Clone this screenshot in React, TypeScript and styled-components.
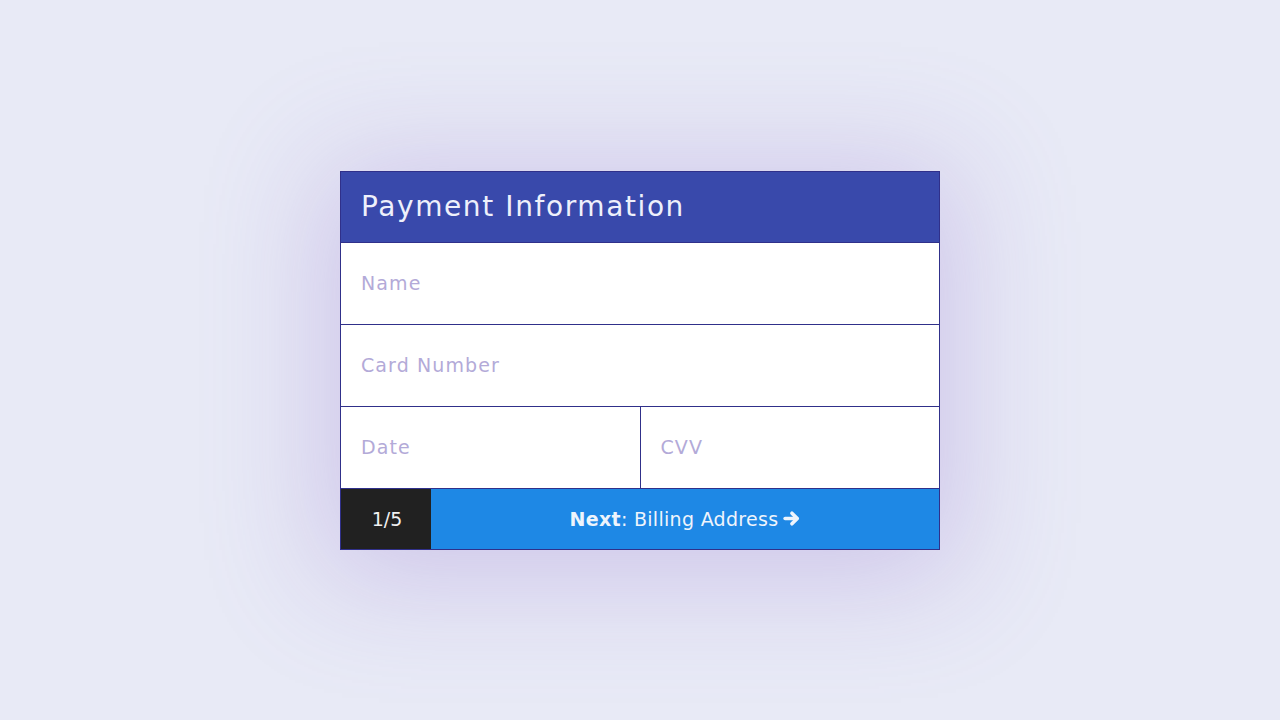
import React from "react";
import styled, { createGlobalStyle } from "styled-components";

const Global = createGlobalStyle`
  * { box-sizing: border-box; }
  body {
    margin: 0;
    background: #e8eaf6;
    font-family: "DejaVu Sans", "Open Sans", sans-serif;
  }
`;

const Page = styled.div`
  height: 100vh;
  display: flex;
  align-items: center;
  justify-content: center;
`;

const Card = styled.form`
  width: 600px;
  border: 1px solid #30308a;
  background: #fff;
  box-shadow: 0 12px 110px 16px rgba(146, 114, 204, 0.3);
  display: flex;
  flex-direction: column;
`;

const Header = styled.div`
  height: 70px;
  background: #3949ab;
  color: #eef0fb;
  display: flex;
  align-items: center;
  padding: 0 20px;
  font-size: 28px;
  letter-spacing: 1.6px;
`;

const Row = styled.div`
  display: flex;
  border-top: 1px solid #30308a;
`;

const Field = styled.input`
  flex: 1;
  min-width: 0;
  height: 81px;
  border: none;
  outline: none;
  padding: 0 20px;
  font-family: inherit;
  font-size: 19px;
  letter-spacing: 1.1px;
  color: #333;
  background: #fff;
  & + & {
    border-left: 1px solid #30308a;
  }
  &::placeholder {
    color: #b3aad8;
  }
`;

const Footer = styled.div`
  height: 61px;
  display: flex;
  border-top: 1px solid #30308a;
`;

const Step = styled.div`
  width: 90px;
  background: #212121;
  color: #f0f0f0;
  display: flex;
  align-items: center;
  justify-content: center;
  font-size: 19px;
  padding-left: 2px;
`;

const NextButton = styled.button`
  flex: 1;
  border: none;
  background: #1e88e5;
  color: #eef4fc;
  font-family: inherit;
  font-size: 19px;
  letter-spacing: 0.3px;
  display: flex;
  align-items: center;
  justify-content: center;
  gap: 5px;
  cursor: pointer;
  b { font-weight: bold; }
`;

const Arrow = () => (
  <svg width="17" height="17" viewBox="0 0 16 16" fill="none" stroke="currentColor" strokeLinecap="round" strokeLinejoin="round" strokeWidth="3.4">
    <path d="M2 8 H13" />
    <path d="M8.4 3 L13.4 8 L8.4 13" />
  </svg>
);

export default function App() {
  return (
    <Page>
      <Global />
      <Card onSubmit={(e) => e.preventDefault()}>
        <Header>Payment Information</Header>
        <Row>
          <Field placeholder="Name" />
        </Row>
        <Row>
          <Field placeholder="Card Number" />
        </Row>
        <Row>
          <Field placeholder="Date" />
          <Field placeholder="CVV" />
        </Row>
        <Footer>
          <Step>1/5</Step>
          <NextButton type="submit">
            <span>
              <b>Next</b>: Billing Address
            </span>
            <Arrow />
          </NextButton>
        </Footer>
      </Card>
    </Page>
  );
}
